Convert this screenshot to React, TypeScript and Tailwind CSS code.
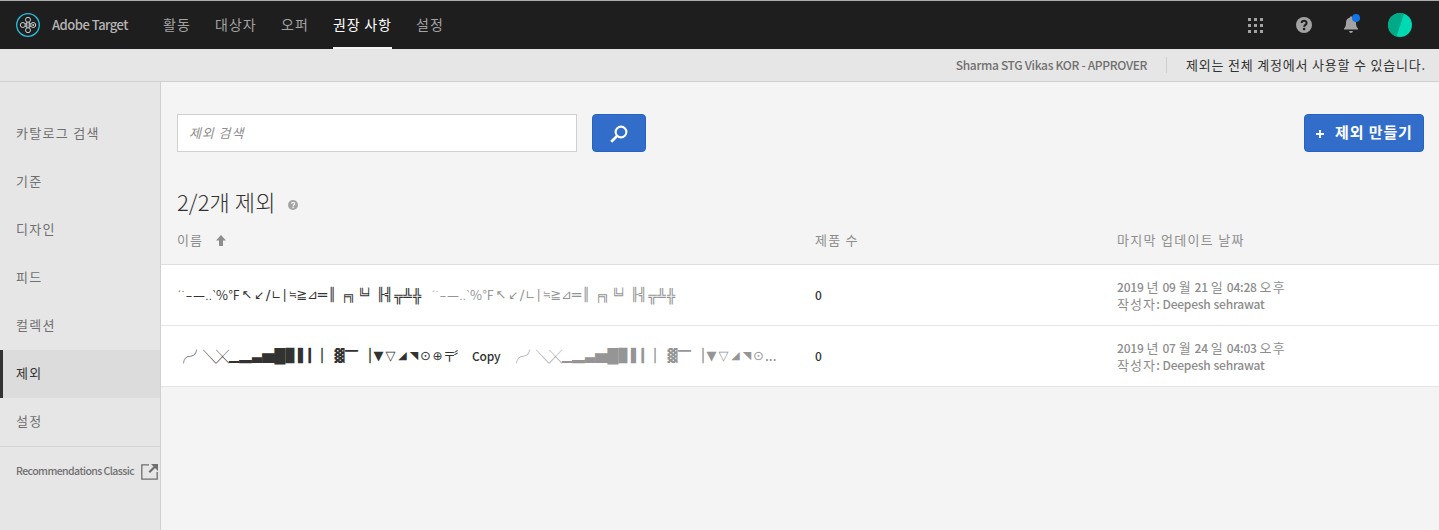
import React from "react";

type Glyph = [char: string, box: string];

const FIRST: Glyph[] = [
  ["ˊ", "w-[4px] text-[9px]"],
  ["˙", "w-[4px] text-[9px]"],
  ["–", "w-[8px] mt-px"],
  ["—", "w-[12px] text-[12px] mt-px"],
  ["‥", "w-[7px] text-[10px] mt-[3px]"],
  ["‵", "w-[4px] text-[12px]"],
  ["%", "w-[12px] font-['Noto_Sans_CJK_KR']"],
  ["℉", "w-[12px] text-[12px] font-['Noto_Sans_CJK_KR']"],
  ["↖", "w-[14px]"],
  ["↙", "w-[10px] text-[12px]"],
  ["∕", "w-[8px] text-[14px]"],
  ["∟", "w-[8px] text-[12px]"],
  ["∣", "w-[9px]"],
  ["≒", "w-[8px] text-[10px]"],
  ["≧", "w-[10px] text-[13px]"],
  ["⊿", "w-[11px] text-[13px]"],
  ["═", "w-[9px] text-[15px]"],
  ["║", "w-[11px]"],
  ["╒", "ml-[3px] w-[7px] text-[12px] mt-px"],
  ["╗", "w-[7px] text-[12px] mt-px"],
  ["╚", "ml-[3px] w-[7px] text-[12px]"],
  ["╛", "w-[7px] text-[12px]"],
  ["╟", "ml-[5px] w-[8px]"],
  ["╣", "w-[8px]"],
  ["╦", "ml-px w-[9px] text-[14px] mt-px"],
  ["╩", "w-[9px] text-[14px] mt-px"],
  ["╬", "w-[10px] text-[14px] mt-px"],
];

const SECOND: Glyph[] = [
  ["╭", "w-[13px] font-['Noto_Sans_CJK_KR']"],
  ["╯", "w-[13px] font-['Noto_Sans_CJK_KR']"],
  ["╲", "w-[13px] font-['Noto_Sans_CJK_KR']"],
  ["╳", "w-[13px] font-['Noto_Sans_CJK_KR']"],
  ["▁", "w-[10px]"],
  ["▂", "w-[13px] font-['Noto_Sans_CJK_KR']"],
  ["▃", "w-[10px]"],
  ["▆", "w-[13px] font-['Noto_Sans_CJK_KR']"],
  ["█", "w-[10px] text-[14px]"],
  ["▉", "w-[11px]"],
  ["▌", "ml-[2px] w-[10px]"],
  ["▎", "w-[11px]"],
  ["▏", "ml-[2px] w-[11px]"],
  ["▓", "ml-[2px] w-[11px]"],
  ["▔", "w-[13px] font-['Noto_Sans_CJK_KR']"],
  ["▕", "ml-[2px] w-[11px]"],
  ["▼", "ml-[2px] w-[11px]"],
  ["▽", "ml-px w-[11px]"],
  ["◢", "w-[13px] text-[11px]"],
  ["◥", "w-[10px] text-[11px]"],
  ["⊙", "w-[13px] text-[13px]"],
  ["⊕", "w-[11px] text-[12px]"],
  ["〒", "w-[13px] font-['Noto_Sans_CJK_KR']"],
  ["〞", "w-[8px] font-['Noto_Sans_CJK_KR']"],
];

function Glyphs({ items }: { items: Glyph[] }) {
  return (
    <>
      {items.map(([char, box], i) => (
        <span key={i} className={`flex shrink-0 justify-center ${box}`}>
          {char}
        </span>
      ))}
    </>
  );
}

function HelpIcon({ className }: { className: string }) {
  return (
    <svg viewBox="0 0 16 16" className={className}>
      <circle cx="8" cy="8" r="8" fill="#a3a3a3" />
      <path d="M5.6 6.1c0-3.2 5-3 5-.2 0 2-2.4 1.9-2.4 3.9" fill="none" stroke="currentColor" strokeWidth="2" />
      <circle cx="8.1" cy="12" r="1.3" fill="currentColor" />
    </svg>
  );
}

const NAV = [
  { label: "활동", cls: "w-[28px] tracking-[1px]" },
  { label: "대상자", cls: "w-[42px] tracking-[1px]" },
  { label: "오퍼", cls: "w-[28px] tracking-[1px]" },
  { label: "권장 사항", cls: "w-[59px] text-white tracking-[0.8px]", on: true },
  { label: "설정", cls: "w-[28px] tracking-[1px]" },
];

function Header() {
  return (
    <header className="flex h-[49px] items-stretch border-t border-[#ababab] bg-[#1e1e1e] text-[#a3a3a3]">
      <div className="flex w-[163px] items-center pl-4">
        <svg viewBox="0 0 24 24" className="size-6" fill="none">
          <circle cx="12" cy="12" r="11.3" stroke="#26c0e2" strokeWidth="1.3" />
          <g stroke="#c9d3d6" strokeWidth="1">
            <circle cx="12" cy="6.8" r="2.5" />
            <circle cx="12" cy="17.2" r="2.5" />
            <circle cx="6.8" cy="12" r="2.5" />
            <circle cx="17.2" cy="12" r="2.5" />
            <path d="M10.8 9v6M13.2 9v6M9 10.8h1.8M9 13.2h1.8M13.2 10.8H15M13.2 13.2H15" />
          </g>
          <circle cx="17.2" cy="12" r="1" fill="#c9d3d6" />
        </svg>
        <span className="ml-3 whitespace-nowrap text-[13px] font-medium tracking-[-0.5px] text-[#b5b5b5]">Adobe Target</span>
      </div>
      <nav className="flex gap-6 text-[14px]">
        {NAV.map((n) => (
          <a key={n.label} className={`flex flex-col whitespace-nowrap ${n.cls}`}>
            <span className="flex flex-1 items-center">{n.label}</span>
            <span className={n.on ? "h-[2px] bg-[#f4f4f4]" : "h-[2px]"} />
          </a>
        ))}
      </nav>
      <div className="ml-auto flex items-center pr-[27px]">
        <svg viewBox="0 0 15 15" className="mr-[33px] size-[15px]" fill="#a3a3a3">
          {[0, 6, 12].flatMap((y) => [0, 6, 12].map((x) => <rect key={`${x}-${y}`} x={x} y={y} width="3" height="3" />))}
        </svg>
        <HelpIcon className="mr-[31px] size-4 text-[#1e1e1e]" />
        <svg viewBox="0 0 18 20" className="-mt-[2px] mr-[27px] h-5 w-[18px]">
          <path
            d="M7 2.8q1-1 2 0v.6q4 .8 4 5.4 0 4.2 2 5.6v1.2H1v-1.2q2-1.4 2-5.6 0-4.6 4-5.4zM6 17h4q-.4 2-2 2t-2-2z"
            fill="#a3a3a3"
          />
          <circle cx="13" cy="4" r="4" fill="#1473e6" />
        </svg>
        <svg viewBox="0 0 24 24" className="size-6">
          <circle cx="12" cy="12" r="12" fill="#00d9b2" />
          <path d="M16 .7A12 12 0 1 0 8.5 23.5z" fill="#00a987" />
        </svg>
      </div>
    </header>
  );
}

const SIDE = ["카탈로그 검색", "기준", "디자인", "피드", "컬렉션", "제외", "설정"];

function Sidebar() {
  return (
    <aside className="flex w-[161px] shrink-0 flex-col border-r border-[#d0d0d0] bg-[#e6e6e6] pt-7 text-[13px] text-[#707070]">
      {SIDE.map((s) => (
        <a
          key={s}
          className={
            s === "제외"
              ? "flex h-12 items-center border-l-[3px] border-[#323232] bg-[#dcdcdc] pb-[2px] pl-[13px] tracking-[1.3px] text-[#323232]"
              : "flex h-12 items-center pb-[2px] pl-4 tracking-[1.3px]"
          }
        >
          {s}
        </a>
      ))}
      <div className="flex h-[50px] items-center whitespace-nowrap border-t border-[#d3d3d3] pl-4 text-[10.5px] font-medium tracking-[-0.57px]">
        <span className="-mt-[2px]">Recommendations Classic</span>
        <svg viewBox="0 0 17 16" className="ml-auto mr-[2px] mt-px h-4 w-[17px] shrink-0" fill="none" stroke="#6e6e6e">
          <path d="M8 .8H.8v14.4h15.4V8" strokeWidth="1.3" />
          <path d="M8.3 8.2 14 2.5" strokeWidth="2.2" />
          <path d="M10 0h7v7z" fill="#6e6e6e" stroke="none" />
        </svg>
      </div>
    </aside>
  );
}

function Mixed({ text }: { text: string }) {
  return (
    <div>
      {text.split(/([가-힣]+)/).map((part, i) =>
        i % 2 ? (
          <span key={i} className="tracking-[1.1px]">
            {part}
          </span>
        ) : (
          <span key={i} className="text-[12px] font-medium tracking-[-0.2px] [word-spacing:0.4px]">
            {part}
          </span>
        ),
      )}
    </div>
  );
}

function Updated({ date }: { date: string }) {
  return (
    <div className="text-[13px] leading-[17px] text-[#8c8c8c]">
      <Mixed text={date} />
      <Mixed text="작성자: Deepesh sehrawat" />
    </div>
  );
}

const ROW = "grid grid-cols-[638px_302px_1fr] items-center pl-4";
const GLYPH_LINE = "flex h-5 items-center whitespace-nowrap font-['DejaVu_Sans','Noto_Sans_CJK_KR',sans-serif] text-[13px] leading-5";

export default function App() {
  return (
    <div className="flex h-[530px] w-full flex-col overflow-hidden bg-[#f4f4f4] font-['Noto_Sans_CJK_KR','DejaVu_Sans',sans-serif] text-[#323232]">
      <Header />
      <div className="flex h-[33px] items-center justify-end border-b border-[#d0d0d0] bg-[#e6e6e6] pr-[13px] text-[13px]">
        <span className="mr-[19px] text-[12px] font-medium tracking-[-0.33px] text-[#707070]">Sharma STG Vikas KOR - APPROVER</span>
        <span className="mr-[19px] h-4 w-px bg-[#cfcfcf]" />
        <span className="tracking-[0.8px]">제외는 전체 계정에서 사용할 수 있습니다.</span>
      </div>
      <div className="flex flex-1">
        <Sidebar />
        <main className="min-w-0 flex-1 pt-8">
          <div className="flex pl-4 pr-[15px]">
            <input
              className="h-[38px] w-[400px] border border-[#d0d0d0] bg-white px-[11px] pb-[2px] text-[13px] italic tracking-[0.9px] outline-none placeholder:text-[#8e8e8e]"
              placeholder="제외 검색"
            />
            <button className="ml-[15px] flex h-[38px] w-[54px] items-center justify-center rounded-[4px] border border-[#2562c6] bg-[#326ec9]">
              <svg viewBox="0 0 18 18" className="mt-px size-[18px]" fill="none" stroke="#fff">
                <circle cx="11" cy="7" r="5.4" strokeWidth="2.1" />
                <path d="M7.3 10.8 1.2 16.8" strokeWidth="2.6" />
              </svg>
            </button>
            <button className="ml-auto flex h-[38px] w-[120px] items-center whitespace-nowrap rounded-[4px] border border-[#2562c6] bg-[#326ec9] pb-[2px] pl-[11px] text-[15px] font-bold text-white">
              <svg viewBox="0 0 8 8" className="mt-[3px] size-2" stroke="#fff" strokeWidth="1.8">
                <path d="M4 0v8M0 4h8" />
              </svg>
              <span className="ml-[11px] tracking-[0.9px]">제외 만들기</span>
            </button>
          </div>
          <div className="mt-[33px] flex h-9 items-center pl-4">
            <h1 className="-mt-1 text-[22px] font-light tracking-[0.1px]">2/2개 제외</h1>
            <HelpIcon className="ml-[12px] mt-1 size-[10px] text-[#f4f4f4]" />
          </div>
          <div className={`${ROW} h-[44px] border-b border-[#dfdfdf] pb-[5px] text-[13px] text-[#8e8e8e]`}>
            <span className="flex items-center tracking-[1px]">
              이름
              <svg viewBox="0 0 10 11" className="ml-[13px] mt-px h-[11px] w-[10px]" fill="#8e8e8e">
                <path d="M5 0l5 5.5H7V11H3V5.500H0z" />
              </svg>
            </span>
            <span className="tracking-[1.2px]">제품 수</span>
            <span className="tracking-[1.3px]">마지막 업데이트 날짜</span>
          </div>
          <div className={`${ROW} h-[61px] border-b border-[#e6e6e6] bg-white`}>
            <div className={GLYPH_LINE}>
              <Glyphs items={FIRST} />
              <span className="ml-[9px] flex items-center text-[#959595]">
                <Glyphs items={FIRST} />
              </span>
            </div>
            <span className="text-[12px] font-medium">0</span>
            <Updated date="2019 년 09 월 21 일 04:28 오후" />
          </div>
          <div className={`${ROW} h-[61px] border-b border-[#e6e6e6] bg-white`}>
            <div className={GLYPH_LINE}>
              <Glyphs items={SECOND} />
              <span className="ml-[8px] w-[28px] font-['Noto_Sans_CJK_KR'] text-[12px] font-medium tracking-[-0.2px]">Copy</span>
              <span className="ml-[10px] flex items-center text-[#959595]">
                <Glyphs items={SECOND.slice(0, 21)} />
                <span className="font-['Noto_Sans_CJK_KR'] font-medium">...</span>
              </span>
            </div>
            <span className="text-[12px] font-medium">0</span>
            <Updated date="2019 년 07 월 24 일 04:03 오후" />
          </div>
        </main>
      </div>
    </div>
  );
}
